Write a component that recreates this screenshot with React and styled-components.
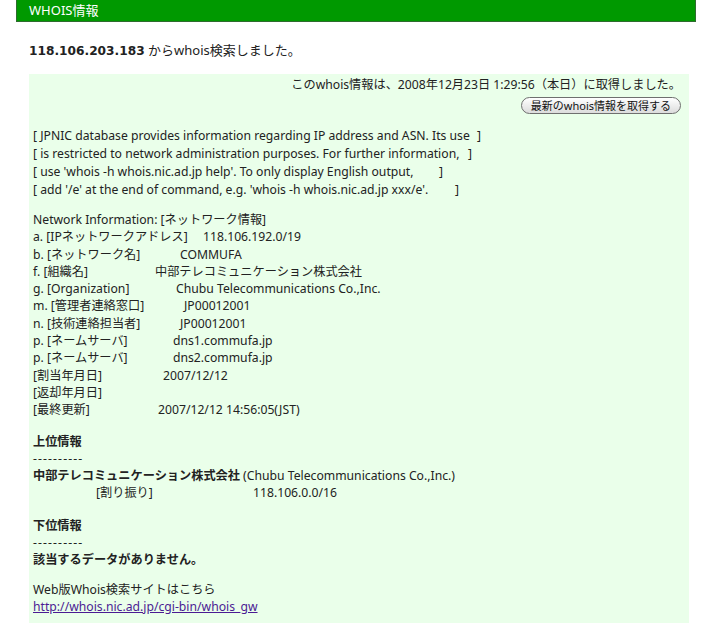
import React from 'react'
import styled, { createGlobalStyle } from 'styled-components'

const Global = createGlobalStyle`
  body {
    margin: 0;
    background: #fff;
    font-family: "Noto Sans", "Noto Sans CJK JP", sans-serif;
    color: #222;
  }
`

const Page = styled.div`
  padding: 0 13px 0 16px;
`

const Header = styled.div`
  height: 21px;
  background: #009900;
  border: 1px solid #2f6b2f;
  border-top: none;
  color: #fff;
  font-size: 13px;
  line-height: 21px;
  padding-left: 12px;
`

const Lead = styled.div`
  margin: 19px 0 0 13px;
  font-size: 13px;
  line-height: 18px;
`

const Ip = styled.b`
  font-family: "DejaVu Sans", "Noto Sans", sans-serif;
  font-weight: bold;
  font-size: 12.2px;
`

const Panel = styled.div`
  margin: 14px 7px 0 13px;
  background: #eaffea;
  padding: 2px 8px 4px 4px;
  font-size: 12.2px;
  line-height: 17.3px;
  min-height: 560px;
`

const Fetched = styled.div`
  text-align: right;
  line-height: 18px;
`

const RefreshRow = styled.div`
  display: flex;
  justify-content: flex-end;
  margin-top: 3px;
`

const RefreshButton = styled.button`
  font-family: inherit;
  font-size: 11px;
  line-height: 14px;
  height: 17px;
  padding: 0 9px;
  border: 1px solid #6f6f6f;
  border-radius: 9px;
  background: linear-gradient(#ffffff, #dcdcdc);
  color: #111;
  cursor: pointer;
`

const Block = styled.div`
  margin-top: ${p => p.$gap}px;
  line-height: ${p => p.$lh || 17.3}px;
`

const Line = styled.div`
  display: flex;
  white-space: pre;
`

const Strong = styled.span`
  font-weight: bold;
`

const Dashes = styled.div`
  letter-spacing: 1.1px;
  line-height: 17.3px;
`

const Label = styled.span`
  flex: none;
  width: ${p => p.$w}px;
  padding-left: ${p => p.$indent || 0}px;
  box-sizing: border-box;
`

const Link = styled.a`
  color: #4b1b93;
  text-decoration: underline;
`

const notice = [
  ["[ JPNIC database provides information regarding IP address and ASN. Its use", 444],
  ["[ is restricted to network administration purposes. For further information,", 435],
  ["[ use 'whois -h whois.nic.ad.jp help'. To only display English output,", 406],
  ["[ add '/e' at the end of command, e.g. 'whois -h whois.nic.ad.jp xxx/e'.", 422],
]

const network = [
  ['a. [IPネットワークアドレス]', '118.106.192.0/19', 170],
  ['b. [ネットワーク名]', 'COMMUFA', 147],
  ['f. [組織名]', '中部テレコミュニケーション株式会社', 122],
  ['g. [Organization]', 'Chubu Telecommunications Co.,Inc.', 143],
  ['m. [管理者連絡窓口]', 'JP00012001', 151],
  ['n. [技術連絡担当者]', 'JP00012001', 147],
  ['p. [ネームサーバ]', 'dns1.commufa.jp', 140],
  ['p. [ネームサーバ]', 'dns2.commufa.jp', 140],
  ['[割当年月日]', '2007/12/12', 130],
  ['[返却年月日]', '', 130],
  ['[最終更新]', '2007/12/12 14:56:05(JST)', 125],
]

const App = () => {
  return (
    <Page>
      <Global />
      <Header>WHOIS情報</Header>
      <Lead>
        <Ip>118.106.203.183</Ip> からwhois検索しました。
      </Lead>
      <Panel>
        <Fetched>このwhois情報は、2008年12月23日 1:29:56（本日）に取得しました。</Fetched>
        <RefreshRow>
          <RefreshButton>最新のwhois情報を取得する</RefreshButton>
        </RefreshRow>

        <Block $gap={13} $lh={18}>
          {notice.map(([text, w]) => (
            <Line key={text}>
              <Label $w={w}>{text}</Label>]
            </Line>
          ))}
        </Block>

        <Block $gap={12}>
          <Line>Network Information: [ネットワーク情報]</Line>
          {network.map(([label, value, w], i) => (
            <Line key={i}>
              <Label $w={w}>{label}</Label>
              {value}
            </Line>
          ))}
        </Block>

        <Block $gap={14}>
          <Line><Strong>上位情報</Strong></Line>
          <Dashes>----------</Dashes>
          <Line>
            <Strong>中部テレコミュニケーション株式会社</Strong> (Chubu Telecommunications Co.,Inc.)
          </Line>
          <Line>
            <Label $w={220} $indent={63}>[割り振り]</Label>
            118.106.0.0/16
          </Line>
        </Block>

        <Block $gap={15}>
          <Line><Strong>下位情報</Strong></Line>
          <Dashes>----------</Dashes>
          <Line><Strong>該当するデータがありません。</Strong></Line>
        </Block>

        <Block $gap={12}>
          <Line>Web版Whois検索サイトはこちら</Line>
          <Line>
            <Link href="#">http://whois.nic.ad.jp/cgi-bin/whois_gw</Link>
          </Line>
        </Block>
      </Panel>
    </Page>
  )
}

export default App
